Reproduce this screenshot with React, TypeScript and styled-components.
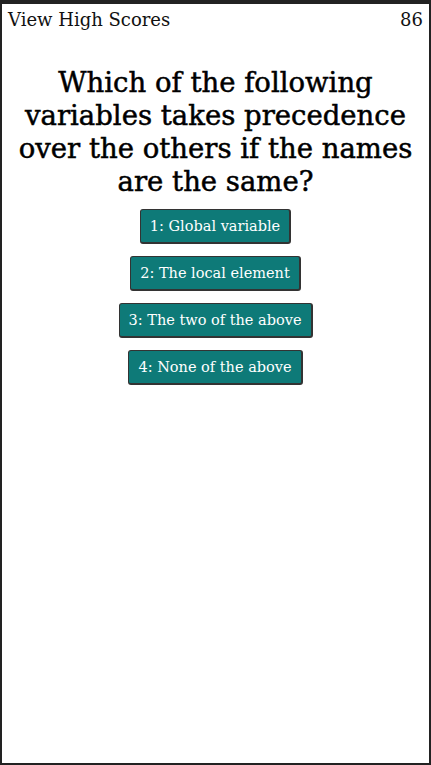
import React from "react";
import styled, { createGlobalStyle } from "styled-components";

const Global = createGlobalStyle`
  html, body { margin: 0; padding: 0; background: #ffffff; }
  body { font-family: "DejaVu Serif", "Liberation Serif", serif; }
  * { box-sizing: border-box; }
`;

const Frame = styled.div`
  height: 765px;
  border: 2px solid #222222;
  border-top-width: 4px;
  background: #ffffff;
  display: flex;
  flex-direction: column;
`;

const TopBar = styled.header`
  display: flex;
  justify-content: space-between;
  align-items: center;
  padding: 5px 6px 0 6px;
  font-size: 18px;
  line-height: 22px;
  color: #111111;
`;

const Question = styled.h1`
  margin: 35px 16px 0 16px;
  text-align: center;
  font-size: 27.5px;
  line-height: 33px;
  font-weight: 400;
  color: #000000;
  -webkit-text-stroke: 0.5px #000;
`;

const Choices = styled.div`
  margin-top: 11px;
  display: flex;
  flex-direction: column;
  align-items: center;
  gap: 12px;
`;

const Choice = styled.button`
  font-family: inherit;
  font-size: 14.5px;
  line-height: 20px;
  color: #ffffff;
  background: #0e7a78;
  border: 1px solid #333333;
  border-right-width: 2px;
  border-bottom-width: 2px;
  border-radius: 3px;
  padding: 6px 9px;
  cursor: pointer;
`;

const answers = [
  "1: Global variable",
  "2: The local element",
  "3: The two of the above",
  "4: None of the above",
];

export default function App() {
  return (
    <>
      <Global />
      <Frame>
        <TopBar>
          <span>View High Scores</span>
          <span>86</span>
        </TopBar>
        <Question>
          Which of the following variables takes precedence over the others if the names are the same?
        </Question>
        <Choices>
          {answers.map((a) => (
            <Choice key={a}>{a}</Choice>
          ))}
        </Choices>
      </Frame>
    </>
  );
}
